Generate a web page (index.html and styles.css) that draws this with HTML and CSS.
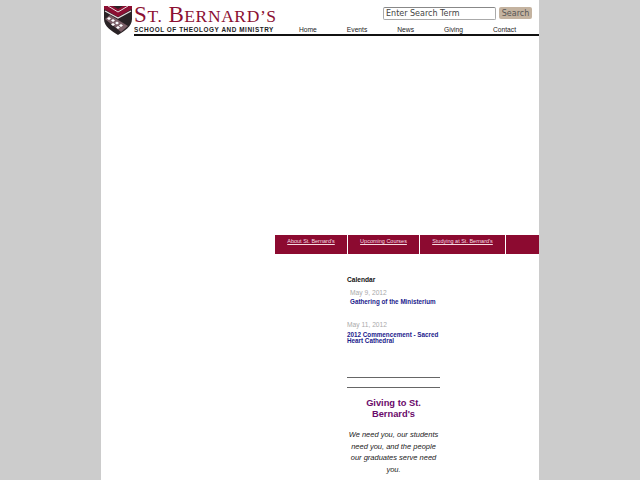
FILE: index.html
```html
<!DOCTYPE html>
<html lang="en">
<head>
<meta charset="utf-8">
<title>St. Bernard's School of Theology and Ministry</title>
<link rel="stylesheet" href="styles.css">
</head>
<body>
<div class="page">
  <header class="header">
    <a class="logo" href="#">
      <svg class="shield" width="28" height="30" viewBox="0 0 28 30">
        <path d="M0 1H28V14C28 22 20 26 14 30C8 26 0 22 0 14Z" fill="#2a2326"/>
        <path d="M0 1H9L14 4L19 1H28V4L14 12L0 4Z" fill="#8c1033"/>
        <path d="M1 6L14 13L27 6" fill="none" stroke="#e6dcdf" stroke-width="1.2"/>
        <path d="M4 1L14 7L24 1" fill="none" stroke="#e6dcdf" stroke-width="1"/>
        <path d="M1 14L6 10L24 21L17 27Z" fill="#7d6169"/>
        <path d="M5 12l2 1.500-2 1.500-2-1.500zM9 14l2 1.500-2 1.500-2-1.500zM13 16.500l2 1.500-2 1.500-2-1.500zM17 19l2 1.500-2 1.500-2-1.500zM9 18l2 1.500-2 1.500-2-1.500zM14 21l2 1.500-2 1.500-2-1.500z" fill="#fff"/>
      </svg>
      <span class="logo-text">
        <span class="logo-name"><span class="logo-cap">S</span>T.<span class="logo-cap logo-b">B</span>ERNARD’S</span>
        <span class="logo-sub">SCHOOL OF THEOLOGY AND MINISTRY</span>
      </span>
    </a>
    <div class="header-right">
      <form class="search">
        <input class="search-input" type="text" value="Enter Search Term">
        <button class="search-btn" type="button">Search</button>
      </form>
      <nav class="nav">
        <a href="#">Home</a><a href="#">Events</a><a href="#">News</a><a href="#">Giving</a><a href="#">Contact</a>
      </nav>
    </div>
  </header>
  <div class="tabs">
    <a class="tab tab-1" href="#">About St. Bernard's</a>
    <a class="tab tab-2" href="#">Upcoming Courses</a>
    <a class="tab tab-3" href="#">Studying at St. Bernard's</a>
    <span class="tab tab-4"></span>
  </div>
  <aside class="side">
    <h3 class="cal-title">Calendar</h3>
    <div class="event event-indent">
      <div class="date">May 9, 2012</div>
      <a class="event-link" href="#">Gathering of the Ministerium</a>
    </div>
    <div class="event">
      <div class="date date-wide">May 11, 2012</div>
      <a class="event-link" href="#">2012 Commencement - Sacred Heart Cathedral</a>
    </div>
    <hr class="rule rule-1">
    <hr class="rule rule-2">
    <h2 class="give-title">Giving to St. Bernard's</h2>
    <p class="give-text">We need you, our students need you, and the people our graduates serve need you.</p>
  </aside>
</div>
</body>
</html>
```

FILE: styles.css
```css
html, body { margin: 0; padding: 0; height: 100%; overflow: hidden; }
body { background: #ccc; font-family: "Liberation Sans", Arial, sans-serif; }
a { text-decoration: none; color: inherit; }
.page { width: 438px; height: 480px; margin-left: 101px; background: #fff; overflow: hidden; }
.header { display: flex; height: 36px; }
.logo { display: flex; flex: none; width: 174px; padding: 5px 0 0 3px; box-sizing: border-box; gap: 2px; }
.shield { flex: none; }
.logo-text { display: flex; flex: 1; min-width: 0; flex-direction: column; box-sizing: border-box; border-bottom: 2px solid #111; }
.logo-name { font-family: "Liberation Serif", serif; font-size: 17.5px; line-height: 19px; letter-spacing: 0.6px; color: #8c1033; white-space: nowrap; }
.logo-cap { font-size: 23px; }
.logo-b { margin-left: 6px; }
.logo-sub { font-size: 6.4px; font-weight: bold; line-height: 7px; letter-spacing: 0.55px; color: #222; white-space: nowrap; }
.header-right { flex: 1; display: flex; flex-direction: column; }
.search { display: flex; justify-content: flex-end; gap: 3px; padding: 7px 7px 0 0; height: 18px; }
.search-input { width: 107px; height: 11px; padding: 0 2px; margin: 0; border: 1px solid #aaa; border-top-color: #888; border-radius: 2px; font: 8px "DejaVu Sans", sans-serif; color: #444; box-sizing: content-box; }
.search-btn { width: 33px; height: 12px; padding: 0; border: 0; border-radius: 2px; background: #c4b3a0; color: #555; font: 8px "DejaVu Sans", sans-serif; }
.nav { display: flex; justify-content: space-between; align-items: center; height: 9px; padding: 0 23px 0 24px; border-bottom: 2px solid #111; font-size: 6.7px; color: #222; }
.tabs { display: flex; gap: 1px; height: 19px; margin: 199px 0 0 174px; }
.tab { display: flex; justify-content: center; height: 19px; padding-top: 3px; box-sizing: border-box; background: #8c0a30; color: #f5dbe2; font-size: 5.5px; text-decoration: underline; }
.tab-1 { width: 72px; }
.tab-2 { width: 71px; }
.tab-3 { width: 85px; }
.tab-4 { flex: 1; text-decoration: none; }
.side { width: 93px; margin: 22px 0 0 246px; }
.cal-title { margin: 0; font-size: 6.6px; line-height: 8px; color: #111; }
.event { margin-right: -3px; }
.event-indent { margin: 5px 0 16px 3px; }
.date { font-size: 6.7px; line-height: 8px; color: #aaa; margin-bottom: 2px; }
.date-wide { margin-bottom: 3px; }
.event-link { display: block; font-size: 6.3px; font-weight: bold; line-height: 6px; color: #1a1a8c; }
.rule { border: 0; height: 1px; background: #666; margin: 0; }
.rule-1 { margin-top: 33px; }
.rule-2 { margin-top: 9px; }
.give-title { margin: 10px 0 0; font-size: 9.3px; line-height: 11px; text-align: center; color: #6a0a6a; }
.give-text { margin: 9px 0 0; font-size: 7.5px; line-height: 11.5px; font-style: italic; text-align: center; color: #222; }
```
